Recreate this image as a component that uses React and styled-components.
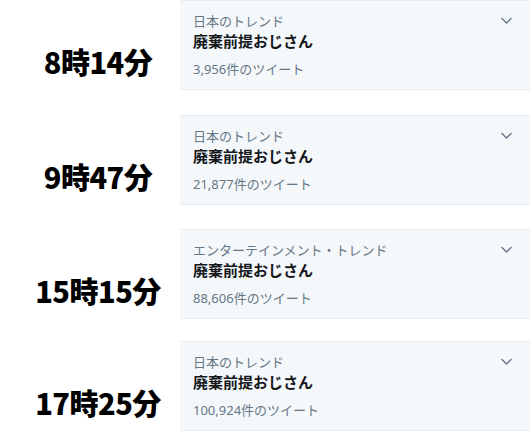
import React from 'react';
import styled, { createGlobalStyle } from 'styled-components';

const GlobalStyle = createGlobalStyle`
	body {
		margin: 0;
		background: #ffffff;
		font-family: "Noto Sans", "Noto Sans CJK JP", sans-serif;
	}
`;

const List = styled.div`
	display: flex;
	flex-direction: column;
	width: 530px;
`;

const Row = styled.div`
	display: flex;
	align-items: stretch;
	margin-bottom: ${(p) => p.$gap}px;
`;

const TimeLabel = styled.div`
	width: 164px;
	padding-left: 16px;
	display: flex;
	align-items: center;
	justify-content: center;
	padding-top: 32px;
	font-family: "Noto Sans CJK JP", sans-serif;
	font-size: 29px;
	font-weight: 900;
	color: #000000;
	letter-spacing: -0.5px;
`;

const Card = styled.div`
	position: relative;
	flex: 1;
	height: 88px;
	box-sizing: content-box;
	padding: 0 0 0 13px;
	background: #f5f8fa;
	border-top: 1px solid #e6ecf0;
	border-bottom: 1px solid #e6ecf0;
	display: flex;
	flex-direction: column;
`;

const Category = styled.div`
	margin-top: 11px;
	font-size: 13px;
	line-height: 19px;
	color: #657786;
`;

const Title = styled.div`
	font-size: 15px;
	line-height: 20px;
	font-weight: 700;
	color: #14171a;
`;

const Count = styled.div`
	margin-top: 9px;
	font-size: 13px;
	line-height: 19px;
	color: #657786;
`;

const Caret = styled.svg`
	position: absolute;
	top: 15px;
	right: 17px;
	width: 13px;
	height: 9px;
`;

const trends = [
	{ time: '8時14分', category: '日本のトレンド', count: '3,956', gap: 25 },
	{ time: '9時47分', category: '日本のトレンド', count: '21,877', gap: 24 },
	{ time: '15時15分', category: 'エンターテインメント・トレンド', count: '88,606', gap: 22 },
	{ time: '17時25分', category: '日本のトレンド', count: '100,924', gap: 0 },
];

const App = () => {
	return (
		<>
			<GlobalStyle />
			<List>
				{trends.map((t) => (
					<Row key={t.time} $gap={t.gap}>
						<TimeLabel>{t.time}</TimeLabel>
						<Card>
							<Category>{t.category}</Category>
							<Title>廃棄前提おじさん</Title>
							<Count>{t.count}件のツイート</Count>
							<Caret viewBox="0 0 13 9">
								<polyline points="1.5,2 6.5,7 11.5,2" fill="none" stroke="#657786" strokeWidth="1.3" />
							</Caret>
						</Card>
					</Row>
				))}
			</List>
		</>
	);
};

export default App;
